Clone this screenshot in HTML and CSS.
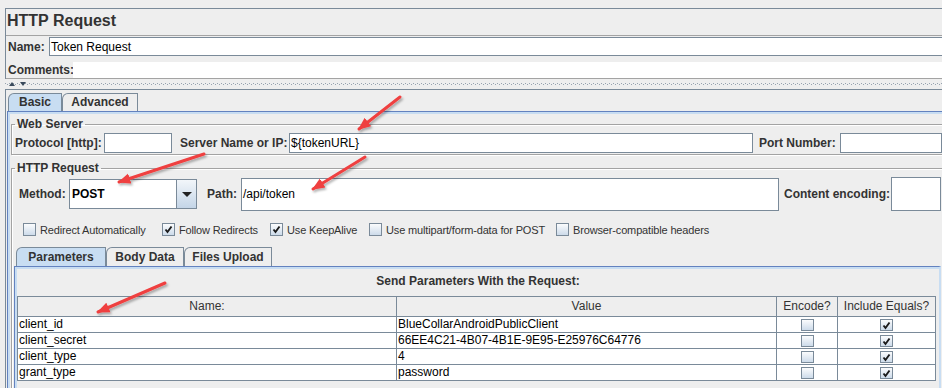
FILE: index.html
```html
<!DOCTYPE html>
<html lang="en">
<head>
    <meta charset="UTF-8">
    <title>HTTP Request</title>
    <link rel="stylesheet" href="styles.css">
</head>
<body>
<div class="screen">
    <div class="top-panel">
        <div class="title">HTTP Request</div>
        <div class="info">
            <div class="info-row name-row">
                <span class="info-label name-label">Name:</span>
                <div class="text-field name-field">Token Request</div>
            </div>
            <div class="info-row comments-row">
                <span class="info-label comments-label">Comments:</span>
                <div class="comments-field"></div>
            </div>
        </div>
    </div>

    <div class="divider">
        <span class="divider-up"></span>
        <span class="divider-down"></span>
    </div>

    <div class="bottom-panel">
        <div class="tabs main-tabs">
            <span class="tab active tab-basic">Basic</span>
            <span class="tab tab-advanced">Advanced</span>
        </div>
        <div class="tab-body">
            <fieldset class="group web-server">
                <legend>Web Server</legend>
                <div class="server-row">
                    <span class="lbl lbl-protocol">Protocol [http]:</span>
                    <div class="text-field protocol-field"></div>
                    <span class="lbl lbl-server">Server Name or IP:</span>
                    <div class="text-field server-field">${tokenURL}</div>
                    <span class="lbl lbl-port">Port Number:</span>
                    <div class="text-field port-field"></div>
                </div>
            </fieldset>

            <fieldset class="group http-request">
                <legend>HTTP Request</legend>
                <div class="method-row">
                    <span class="lbl lbl-method">Method:</span>
                    <div class="combo">
                        <span class="combo-value">POST</span>
                        <span class="combo-button"><span class="combo-arrow"></span></span>
                    </div>
                    <span class="lbl lbl-path">Path:</span>
                    <div class="text-field path-field">/api/token</div>
                    <span class="lbl lbl-encoding">Content encoding:</span>
                    <div class="text-field encoding-field"></div>
                </div>

                <div class="options">
                    <span class="check check-redirect"><span class="box"></span>Redirect Automatically</span>
                    <span class="check check-follow"><span class="box checked"><svg viewBox="0 0 11 11"><path d="M2.5 5.5 L4.5 8 L8.5 2.5"/></svg></span>Follow Redirects</span>
                    <span class="check check-keepalive"><span class="box checked"><svg viewBox="0 0 11 11"><path d="M2.5 5.5 L4.5 8 L8.5 2.5"/></svg></span>Use KeepAlive</span>
                    <span class="check check-multipart"><span class="box"></span>Use multipart/form-data for POST</span>
                    <span class="check"><span class="box"></span>Browser-compatible headers</span>
                </div>

                <div class="tabs sub-tabs">
                    <span class="tab active tab-params">Parameters</span>
                    <span class="tab tab-data">Body Data</span>
                    <span class="tab tab-files">Files Upload</span>
                </div>
                <div class="sub-body">
                    <div class="params-title">Send Parameters With the Request:</div>
                    <div class="params">
                        <div class="th">Name:</div>
                        <div class="th">Value</div>
                        <div class="th">Encode?</div>
                        <div class="th">Include Equals?</div>

                        <div class="td">client_id</div>
                        <div class="td">BlueCollarAndroidPublicClient</div>
                        <div class="td center"><span class="box small"></span></div>
                        <div class="td center"><span class="box small checked"><svg viewBox="0 0 11 11"><path d="M2.5 5.5 L4.5 8 L8.5 2.5"/></svg></span></div>

                        <div class="td">client_secret</div>
                        <div class="td">66EE4C21-4B07-4B1E-9E95-E25976C64776</div>
                        <div class="td center"><span class="box small"></span></div>
                        <div class="td center"><span class="box small checked"><svg viewBox="0 0 11 11"><path d="M2.5 5.5 L4.5 8 L8.5 2.5"/></svg></span></div>

                        <div class="td">client_type</div>
                        <div class="td">4</div>
                        <div class="td center"><span class="box small"></span></div>
                        <div class="td center"><span class="box small checked"><svg viewBox="0 0 11 11"><path d="M2.5 5.5 L4.5 8 L8.5 2.5"/></svg></span></div>

                        <div class="td">grant_type</div>
                        <div class="td">password</div>
                        <div class="td center"><span class="box small"></span></div>
                        <div class="td center"><span class="box small checked"><svg viewBox="0 0 11 11"><path d="M2.5 5.5 L4.5 8 L8.5 2.5"/></svg></span></div>
                    </div>
                </div>
            </fieldset>
        </div>
    </div>

    <!-- red annotation arrows drawn over the form -->
    <svg class="arrows" viewBox="0 0 942 388">
        <defs>
            <marker id="head" viewBox="0 0 10 10" refX="9" refY="5" markerWidth="4.2" markerHeight="4.2" orient="auto">
                <path d="M0 0.8 L10 5 L0 9.2 z" fill="#ef3f3f"/>
            </marker>
            <filter id="shade" x="-20%" y="-20%" width="140%" height="140%">
                <feDropShadow dx="1.5" dy="2" stdDeviation="1.2" flood-color="#000" flood-opacity="0.3"/>
            </filter>
        </defs>
        <g stroke="#ef3f3f" stroke-width="3" stroke-linecap="round" fill="none" marker-end="url(#head)" filter="url(#shade)">
            <line x1="400" y1="97" x2="359" y2="129"/>
            <line x1="204" y1="154" x2="119" y2="182"/>
            <line x1="365" y1="157" x2="313" y2="189"/>
            <line x1="165" y1="283" x2="98" y2="312"/>
        </g>
    </svg>
</div>
</body>
</html>
```

FILE: styles.css
```css
body {
    margin: 0;
    background-color: #eeeeee;
    font-family: "Liberation Sans", Arial, sans-serif;
    color: #333;
}
.screen {
    position: relative;
    width: 942px;
    height: 388px;
    overflow: hidden;
    box-sizing: border-box;
    padding: 8px 0 0 5px;
}

/* header part */
.top-panel {
    margin-right: -8px;
    border-top: 1px solid #7a8a99;
    border-left: 1px solid #7a8a99;
}
.title {
    height: 26px;
    padding-left: 1px;
    font-size: 16px;
    font-weight: bold;
    line-height: 24px;
}
.info {
    border-top: 1px solid #a3a3a3;
    border-bottom: 1px solid #a3a3a3;
}
.info-row {
    display: flex;
    padding-left: 2px;
    height: 21px;
}
.name-row {
    align-items: center;
}
.comments-row {
    align-items: flex-end;
}
.info-label {
    flex: none;
    font-size: 12px;
    font-weight: bold;
    line-height: 16px;
}
.name-label {
    width: 41px;
}
.comments-label {
    width: 65px;
}
.text-field {
    box-sizing: border-box;
    border: 1px solid #7a8a99;
    background: #fff;
    color: #000;
    font-size: 12px;
    padding-left: 1px;
    display: flex;
    align-items: center;
    flex: none;
}
.name-field {
    flex: 1;
    height: 19px;
}
.comments-field {
    flex: 1;
    height: 16px;
    background: #fff;
}

/* split pane divider */
.divider {
    height: 10px;
    display: flex;
    align-items: center;
    gap: 5px;
    padding-left: 4px;
    background-image: linear-gradient(90deg, #97a3b0 1px, transparent 1px), linear-gradient(90deg, #97a3b0 1px, transparent 1px);
    background-size: 4px 1px, 4px 1px;
    background-position: 0 4px, 2px 5px;
    background-repeat: repeat-x;
}
.divider-up, .divider-down {
    width: 0;
    height: 0;
    border-left: 3px solid transparent;
    border-right: 3px solid transparent;
}
.divider-up {
    border-bottom: 4px solid #3a4a5c;
}
.divider-down {
    border-top: 4px solid #3a4a5c;
}

/* lower pane with tabs */
.bottom-panel {
    margin-right: -8px;
    border-top: 1px solid #7a8a99;
    border-left: 1px solid #7a8a99;
    padding-left: 1px;
    height: 320px;
}
.tabs {
    display: flex;
}
.main-tabs {
    margin-top: 3px;
    padding-left: 1px;
}
.tab {
    box-sizing: border-box;
    height: 18px;
    border: 1px solid #7a8a99;
    border-bottom: none;
    border-top-left-radius: 6px;
    font-size: 12px;
    font-weight: bold;
    line-height: 17px;
    text-align: center;
    background: #eeeeee;
}
.tab.active {
    background: #c8ddf2;
}
.tab-basic {
    width: 54px;
}
.tab-advanced {
    width: 76px;
}
.tab-body {
    border-top: 1px solid #6382bf;
    border-left: 1px solid #6382bf;
    box-shadow: inset 2px 2px 0 #c8ddf2;
    padding: 5px 0 0 3px;
    height: 300px;
}

.group {
    margin: 0 6px 0 0;
    padding: 0 2px;
    border: 1px solid #a3a3a3;
    box-shadow: 1px 1px 0 #fff, inset 1px 1px 0 #fff;
    min-width: 0;
}
.group legend {
    margin-left: 1px;
    padding: 0 2px;
    font-size: 12px;
    font-weight: bold;
    line-height: 14px;
}
.lbl {
    flex: none;
    font-size: 12px;
    font-weight: bold;
}

.web-server {
    padding-top: 2px;
    padding-bottom: 1px;
}
.server-row {
    display: flex;
    align-items: center;
    height: 20px;
    padding-left: 1px;
}
.server-row .text-field {
    height: 20px;
}
.lbl-protocol {
    width: 89px;
}
.protocol-field {
    width: 68px;
}
.lbl-server {
    margin-left: 8px;
    width: 109px;
}
.server-field {
    width: 464px;
}
.lbl-port {
    margin-left: 6px;
    width: 81px;
}
.port-field {
    width: 102px;
}

.http-request {
    margin-top: 6px;
    padding-top: 2px;
    height: 240px;
}
.method-row {
    display: flex;
    align-items: center;
    height: 34px;
    padding-left: 5px;
}
.lbl-method {
    width: 50px;
}
.combo {
    box-sizing: border-box;
    display: flex;
    width: 129px;
    height: 30px;
    border: 1px solid #7a8a99;
    background: #fff;
}
.combo-value {
    flex: 1;
    display: flex;
    align-items: center;
    padding-left: 2px;
    font-size: 12px;
    font-weight: bold;
    color: #000;
}
.combo-button {
    width: 19px;
    border-left: 1px solid #7a8a99;
    background: linear-gradient(#f2f6fa, #c4d5e7);
    display: flex;
    align-items: center;
    justify-content: center;
}
.combo-arrow {
    width: 0;
    height: 0;
    border-left: 5px solid transparent;
    border-right: 5px solid transparent;
    border-top: 5px solid #222;
}
.lbl-path {
    margin-left: 10px;
    width: 34px;
}
.path-field {
    width: 538px;
    height: 33px;
}
.lbl-encoding {
    margin-left: 5px;
    width: 107px;
}
.encoding-field {
    width: 50px;
    height: 34px;
}

.options {
    display: flex;
    align-items: center;
    gap: 13px;
    height: 13px;
    margin-top: 12px;
    padding-left: 9px;
}
.check {
    display: flex;
    align-items: center;
    gap: 4px;
    flex: none;
    font-size: 11px;
    letter-spacing: -0.15px;
    white-space: nowrap;
}
.check-redirect {
    width: 126px;
}
.check-follow {
    width: 95px;
}
.check-keepalive {
    width: 86px;
}
.check-multipart {
    width: 174px;
}
.box {
    box-sizing: border-box;
    width: 13px;
    height: 13px;
    border: 1px solid #7a8a99;
    background: linear-gradient(#fbfcfd, #cddbea);
    display: inline-block;
    flex: none;
}
.box.small {
    width: 13px;
    height: 12px;
}
.box svg {
    display: block;
    width: 11px;
    height: 11px;
}
.box path {
    fill: none;
    stroke: #1a1a1a;
    stroke-width: 1.9;
}

.sub-tabs {
    margin-top: 11px;
    padding-left: 2px;
}
.sub-tabs .tab {
    height: 19px;
    line-height: 18px;
}
.tab-params {
    width: 90px;
}
.tab-data {
    width: 78px;
}
.tab-files {
    width: 88px;
}
.sub-body {
    border-top: 1px solid #6382bf;
    border-left: 1px solid #6382bf;
    border-right: 2px solid #c8ddf2;
    box-shadow: inset 2px 2px 0 #c8ddf2;
    padding: 2px 0 0 2px;
    height: 140px;
}
.params-title {
    height: 27px;
    line-height: 25px;
    text-align: center;
    font-size: 12px;
    font-weight: bold;
}
.params {
    display: grid;
    grid-template-columns: 378px 379px 60px 97px;
    grid-template-rows: 19px repeat(4, 15px);
    gap: 1px;
    width: 919px;
    box-sizing: border-box;
    border: 1px solid #7a8a99;
    background: #7a8a99;
    font-size: 12px;
}
.th {
    background: #eeeeee;
    text-align: center;
    line-height: 19px;
}
.td {
    background: #fff;
    color: #000;
    line-height: 15px;
    padding-left: 1px;
    white-space: nowrap;
}
.td.center {
    display: flex;
    align-items: center;
    justify-content: center;
    padding-left: 0;
}

.arrows {
    position: absolute;
    top: 0;
    left: 0;
    width: 942px;
    height: 388px;
    pointer-events: none;
}
```
